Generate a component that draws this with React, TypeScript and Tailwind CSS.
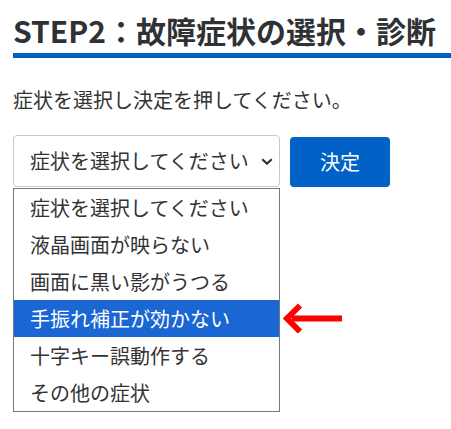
import React from 'react';

const options = [
  '症状を選択してください',
  '液晶画面が映らない',
  '画面に黒い影がうつる',
  '手振れ補正が効かない',
  '十字キー誤動作する',
  'その他の症状',
];

const ChevronDown: React.FC = () => (
  <svg width="12" height="7" viewBox="0 0 12 7" fill="none" className="text-[#333]">
    <path d="M1.2 1.2 L6 5.6 L10.8 1.2" stroke="currentColor" strokeWidth="2.2" />
  </svg>
);

const RedArrow: React.FC = () => (
  <svg width="60" height="30" viewBox="0 0 60 30" fill="none">
    <path d="M9 15.5 H59" stroke="#ff0000" strokeWidth="6" />
    <path d="M17 2.5 L4 15.5 L17 28.5" stroke="#ff0000" strokeWidth="6" strokeLinejoin="miter" />
  </svg>
);

const App: React.FC = () => {
  const selected = 3;
  return (
    <div
      className="relative min-h-[429px] w-[451px] overflow-hidden bg-white pl-[13px] text-[#333]"
      style={{ fontFamily: '"Noto Sans CJK JP", "Noto Sans", sans-serif' }}
    >
      <h2 className="mt-[10px] border-b-[5px] border-[#0060c6] pb-[3px] text-[30px] leading-[40px] font-bold whitespace-nowrap text-[#2f3235]">
        STEP2：故障症状の選択・診断
      </h2>

      <p className="mt-[27px] text-[20px] leading-[30px]">症状を選択し決定を押してください。</p>

      <div className="mt-[20px] flex items-end gap-[10px]">
        <div className="relative w-[267px]">
          {/* select box */}
          <div className="flex h-[52px] items-center justify-between rounded-[4px] border border-[#c8c8c8] bg-white pr-[6px] pl-[16px]">
            <span className="text-[20px] leading-[30px]">{options[0]}</span>
            <ChevronDown />
          </div>

          {/* opened list */}
          <ul className="absolute top-[53px] left-0 z-10 w-[267px] border border-[#777] bg-white">
            {options.map((o, i) => (
              <li
                key={o}
                className={
                  i === selected
                    ? 'flex h-[37px] items-center bg-[#1a66d2] pl-[16px] text-[20px] text-white'
                    : 'flex h-[37px] items-center pl-[16px] text-[20px] text-[#333]'
                }
              >
                {o}
              </li>
            ))}
          </ul>
        </div>

        <button className="h-[50px] w-[100px] rounded-[4px] bg-[#0061c6] text-[20px] text-white">決定</button>
      </div>

      <div className="absolute top-[303px] left-[283px]">
        <RedArrow />
      </div>
    </div>
  );
};

export default App;
